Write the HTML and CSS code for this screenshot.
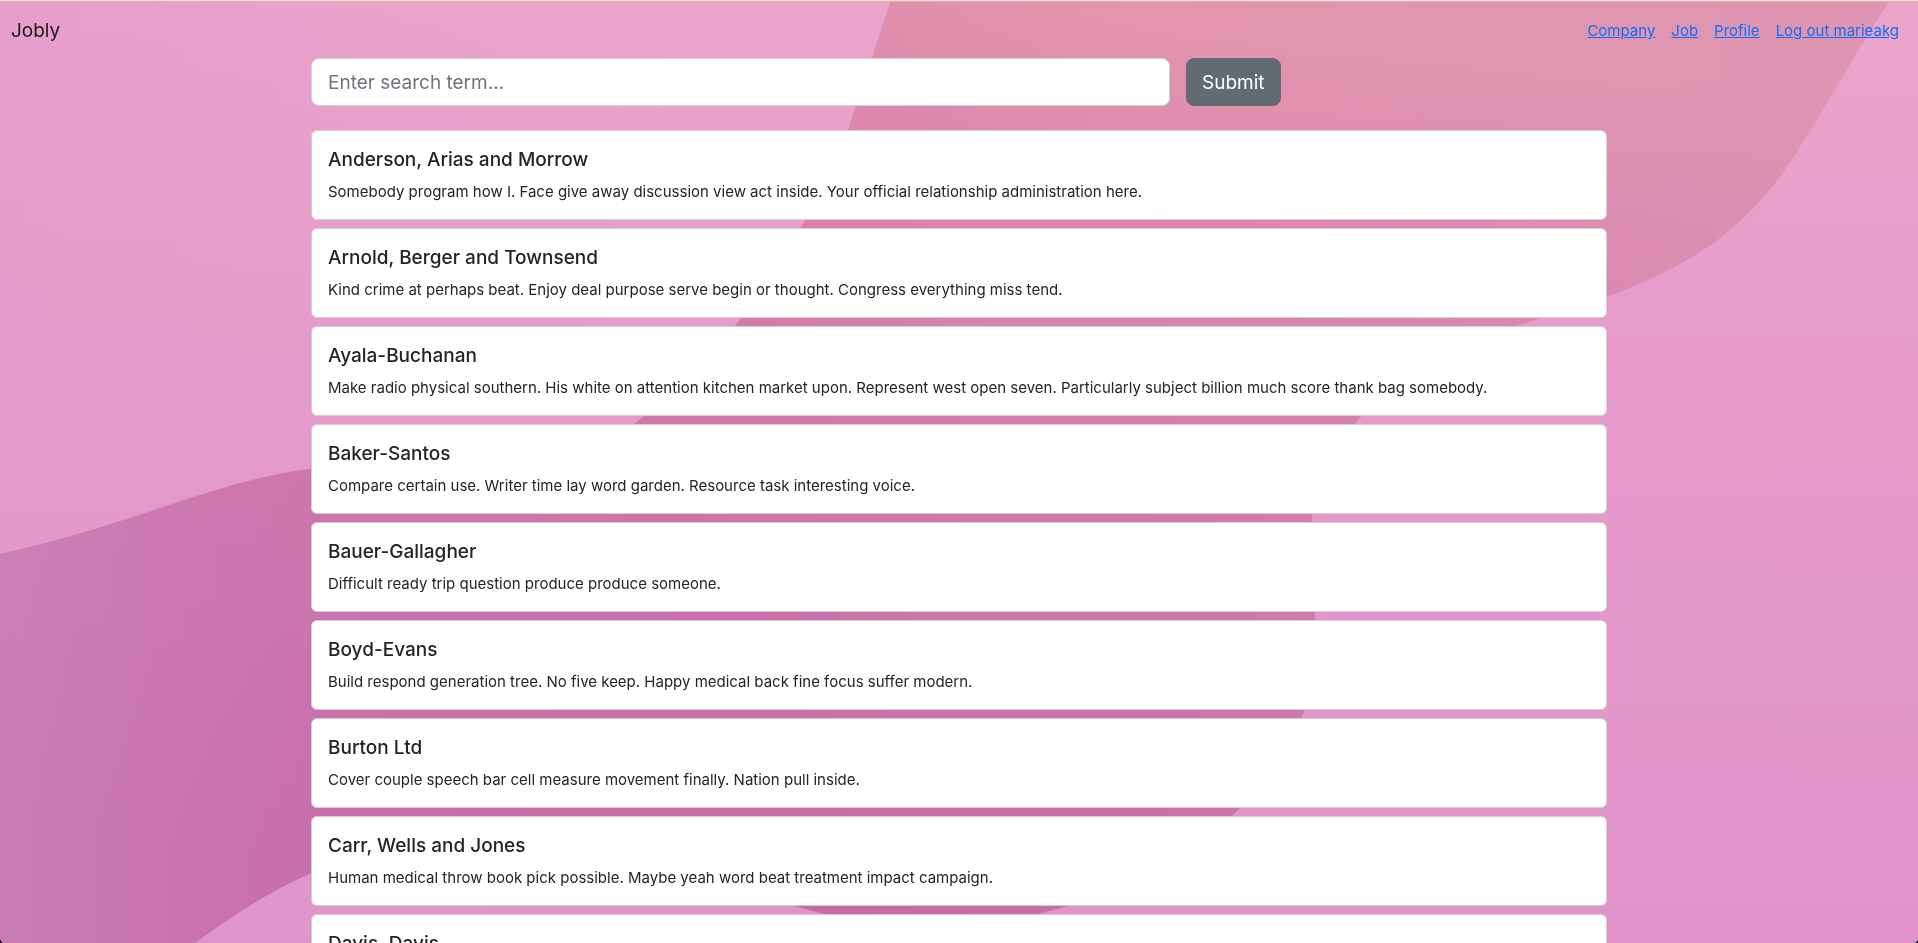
FILE: index.html
```html
<!DOCTYPE html>
<html lang="en">
<head>
<meta charset="utf-8">
<meta name="viewport" content="width=device-width, initial-scale=1">
<title>Jobly</title>
<link rel="stylesheet" href="styles.css">
</head>
<body>
<svg class="backdrop" viewBox="0 0 1918 943" preserveAspectRatio="none" aria-hidden="true">
  <defs>
    <linearGradient id="light" x1="0" y1="0" x2="0" y2="1">
      <stop offset="0" stop-color="#eca5ca"/>
      <stop offset="0.4" stop-color="#e69bca"/>
      <stop offset="1" stop-color="#df93ca"/>
    </linearGradient>
    <linearGradient id="lightLeft" x1="0" y1="0" x2="1" y2="0">
      <stop offset="0" stop-color="#e29acc" stop-opacity="0.5"/>
      <stop offset="0.35" stop-color="#e29acc" stop-opacity="0"/>
    </linearGradient>
    <linearGradient id="dark" gradientUnits="userSpaceOnUse" x1="1000" y1="0" x2="900" y2="920">
      <stop offset="0" stop-color="#e395ab"/>
      <stop offset="0.25" stop-color="#db85ad"/>
      <stop offset="0.5" stop-color="#d178aa"/>
      <stop offset="1" stop-color="#c466a7"/>
    </linearGradient>
    <linearGradient id="darkSides" gradientUnits="userSpaceOnUse" x1="0" y1="0" x2="1918" y2="0">
      <stop offset="0" stop-color="#cc84ba" stop-opacity="0.75"/>
      <stop offset="0.17" stop-color="#ca78b2" stop-opacity="0.45"/>
      <stop offset="0.4" stop-color="#d070a4" stop-opacity="0.25"/>
      <stop offset="0.6" stop-color="#da98bb" stop-opacity="0.1"/>
      <stop offset="1" stop-color="#d894ba" stop-opacity="0.45"/>
    </linearGradient>
    <path id="wave" d="M891 0 L848 130 C828 184 790 254 738 322 C700 371 667 399 634 424 C530 500 430 460 311 469 C220 479 130 526 0 554 V943 H195 C232 916 268 892 311 873 C480 805 640 830 795 906 Q930 946 1068 906 Q1170 870 1236 812 Q1285 765 1303 714 Q1317 670 1315 616 Q1308 570 1312 518 Q1318 465 1358 420 C1405 367 1458 344 1528 322 L1607 297 C1670 272 1735 244 1788 165 C1825 110 1852 58 1890 0 Z"/>
  </defs>
  <rect width="1918" height="943" fill="url(#light)"/>
  <rect width="1918" height="943" fill="url(#lightLeft)"/>
  <use href="#wave" fill="url(#dark)"/>
  <use href="#wave" fill="url(#darkSides)"/>
  <path d="M0 939 Q1 942 3 943 H0 Z M1918 940 Q1917 942 1915 943 H1918 Z"/>
</svg>
<header class="navbar">
  <a class="brand" href="#">Jobly</a>
  <nav class="links">
    <a href="#">Company</a>
    <a href="#">Job</a>
    <a href="#">Profile</a>
    <a href="#">Log out marieakg</a>
  </nav>
</header>
<main class="container">
  <form class="search">
    <input class="search-input" type="text" placeholder="Enter search term..." aria-label="Search term">
    <button class="search-button" type="button">Submit</button>
  </form>
  <section class="cards">
    <article class="card"><h2>Anderson, Arias and Morrow</h2><p>Somebody program how I. Face give away discussion view act inside. Your official relationship administration here.</p></article>
    <article class="card"><h2>Arnold, Berger and Townsend</h2><p>Kind crime at perhaps beat. Enjoy deal purpose serve begin or thought. Congress everything miss tend.</p></article>
    <article class="card"><h2>Ayala-Buchanan</h2><p>Make radio physical southern. His white on attention kitchen market upon. Represent west open seven. Particularly subject billion much score thank bag somebody.</p></article>
    <article class="card"><h2>Baker-Santos</h2><p>Compare certain use. Writer time lay word garden. Resource task interesting voice.</p></article>
    <article class="card"><h2>Bauer-Gallagher</h2><p>Difficult ready trip question produce produce someone.</p></article>
    <article class="card"><h2>Boyd-Evans</h2><p>Build respond generation tree. No five keep. Happy medical back fine focus suffer modern.</p></article>
    <article class="card"><h2>Burton Ltd</h2><p>Cover couple speech bar cell measure movement finally. Nation pull inside.</p></article>
    <article class="card"><h2>Carr, Wells and Jones</h2><p>Human medical throw book pick possible. Maybe yeah word beat treatment impact campaign.</p></article>
    <article class="card"><h2>Davis, Davis</h2></article>
  </section>
</main>
</body>
</html>
```
FILE: styles.css
```css
* {
  box-sizing: border-box;
}

html {
  height: 100%;
  overflow: hidden;
}

body {
  height: 100%;
  margin: 0;
  overflow: hidden;
  border-top: 1px solid #fadccf;
  color: #212529;
  font-family: Inter, "Liberation Sans", sans-serif;
  font-size: 15px;
  line-height: 24px;
}

.backdrop {
  position: fixed;
  inset: 0;
  top: 0;
  z-index: -1;
  width: 100%;
  height: 100%;
}

.navbar {
  display: flex;
  align-items: center;
  justify-content: space-between;
  height: 57px;
  padding: 2px 19px 0 11px;
  border-top: 1px solid #d9b5c0;
}

.brand {
  color: #18191b;
  font-size: 19px;
  text-decoration: none;
}

.links {
  display: flex;
  gap: 16px;
}

.links a {
  color: #0d6efd;
}

.container {
  max-width: 1320px;
  margin: 0 auto;
  padding: 0 12px;
}

.search {
  display: flex;
  gap: 16px;
  margin-bottom: 24px;
}

.search-input,
.search-button {
  height: 48px;
  padding: 8px 16px;
  border: 1px solid #ced4da;
  border-radius: 8px;
  font: inherit;
  font-size: 19px;
}

.search-input {
  width: 859px;
  min-width: 0;
  background: #fff;
  color: #212529;
}

.search-input::placeholder {
  color: #6c757d;
}

.search-button {
  padding: 9px 15px 7px;
  border-color: #626a72;
  background: #626a72;
  color: #fff;
}

.cards {
  display: grid;
  gap: 8px;
}

.card {
  min-height: 90px;
  padding: 17px 16px 15px;
  border: 1px solid #ced0d3;
  border-radius: 6px;
  background: #fff;
}

.card h2 {
  margin: 0 0 8px;
  font-size: 19px;
  font-weight: 500;
  line-height: 24px;
}

.card p {
  margin: 0;
}
```
